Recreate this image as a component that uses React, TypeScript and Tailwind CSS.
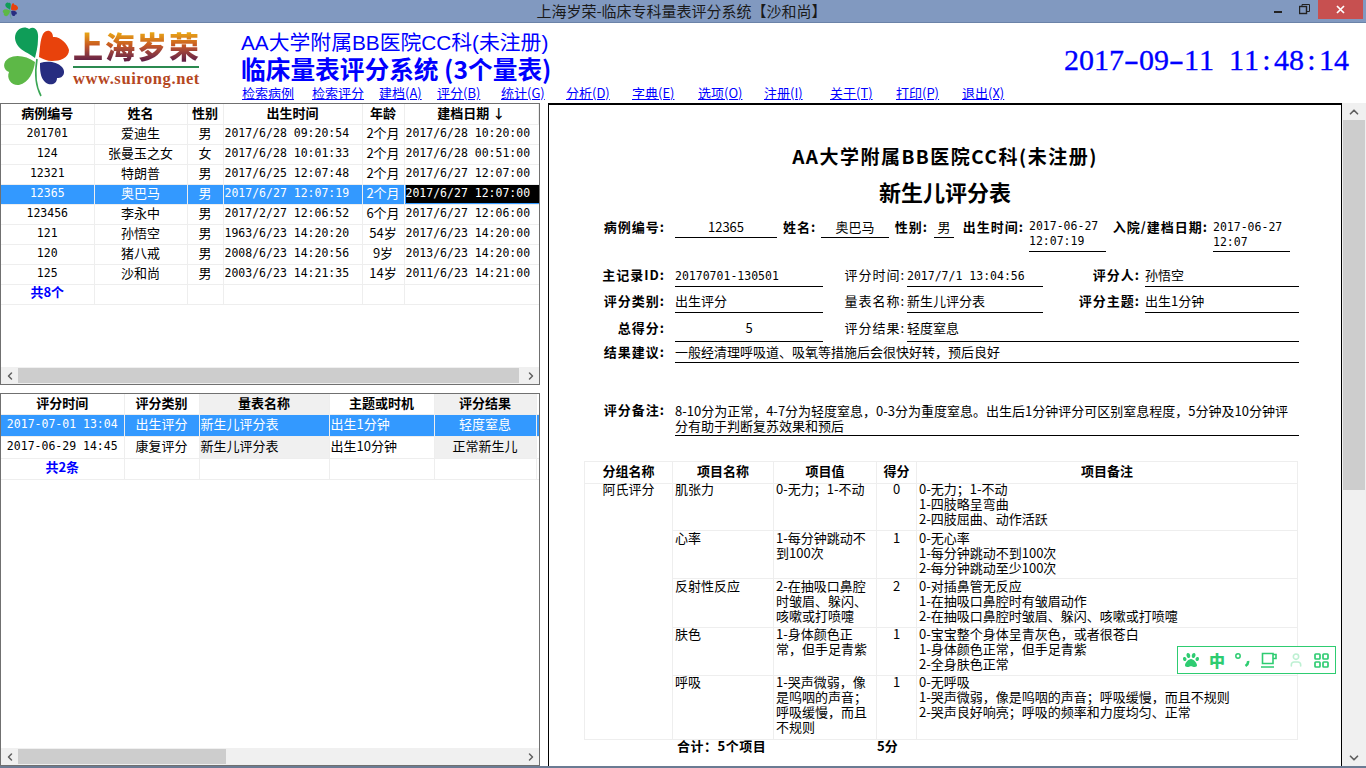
import { FaPaw } from "react-icons/fa";
import { ChevronLeft, ChevronRight, ChevronUp, ChevronDown, User } from "lucide-react";
import type { ReactNode } from "react";

const CJK = "font-['Noto_Sans_CJK_SC','Liberation_Sans',sans-serif]";
const MONO = "font-['DejaVu_Sans_Mono','Noto_Sans_CJK_SC',monospace] text-[11.5px]";

const menu = [
  { t: "检索病例", c: "w-[52px]" },
  { t: "检索评分", c: "w-[52px] ml-[18px]" },
  { t: "建档(A)", c: "w-[46px] ml-[15px]" },
  { t: "评分(B)", c: "w-[46px] ml-[12px]" },
  { t: "统计(G)", c: "w-[46px] ml-[18px]" },
  { t: "分析(D)", c: "w-[46px] ml-[19px]" },
  { t: "字典(E)", c: "w-[46px] ml-[20px]" },
  { t: "选项(O)", c: "w-[46px] ml-[20px]" },
  { t: "注册(I)", c: "w-[46px] ml-[20px]" },
  { t: "关于(T)", c: "w-[46px] ml-[20px]" },
  { t: "打印(P)", c: "w-[46px] ml-[20px]" },
  { t: "退出(X)", c: "w-[46px] ml-[20px]" },
];

const patients = [
  ["201701", "爱迪生", "男", "2017/6/28 09:20:54", "2个月", "2017/6/28 10:20:00"],
  ["124", "张曼玉之女", "女", "2017/6/28 10:01:33", "2个月", "2017/6/28 00:51:00"],
  ["12321", "特朗普", "男", "2017/6/25 12:07:48", "2个月", "2017/6/27 12:07:00"],
  ["12365", "奥巴马", "男", "2017/6/27 12:07:19", "2个月", "2017/6/27 12:07:00"],
  ["123456", "李永中", "男", "2017/2/27 12:06:52", "6个月", "2017/6/27 12:06:00"],
  ["121", "孙悟空", "男", "1963/6/23 14:20:20", "54岁", "2017/6/23 14:20:00"],
  ["120", "猪八戒", "男", "2008/6/23 14:20:56", "9岁", "2013/6/23 14:20:00"],
  ["125", "沙和尚", "男", "2003/6/23 14:21:35", "14岁", "2011/6/23 14:21:00"],
];

const items = [
  { name: "肌张力", value: "0-无力；1-不动", score: "0", h: "h-[47px]", top: "-mt-[3px]", note: ["0-无力；1-不动", "1-四肢略呈弯曲", "2-四肢屈曲、动作活跃"] },
  { name: "心率", value: "1-每分钟跳动不到100次", score: "1", h: "h-[48px]", top: "-mt-[1px]", note: ["0-无心率", "1-每分钟跳动不到100次", "2-每分钟跳动至少100次"] },
  { name: "反射性反应", value: "2-在抽吸口鼻腔时皱眉、躲闪、咳嗽或打喷嚏", score: "2", h: "h-[49px]", top: "-mt-[1px]", note: ["0-对插鼻管无反应", "1-在抽吸口鼻腔时有皱眉动作", "2-在抽吸口鼻腔时皱眉、躲闪、咳嗽或打喷嚏"] },
  { name: "肤色", value: "1-身体颜色正常，但手足青紫", score: "1", h: "h-[48px]", top: "-mt-[2px]", note: ["0-宝宝整个身体呈青灰色，或者很苍白", "1-身体颜色正常，但手足青紫", "2-全身肤色正常"] },
  { name: "呼吸", value: "1-哭声微弱，像是呜咽的声音；呼吸缓慢，而且不规则", score: "1", h: "h-[64px]", top: "-mt-[2px]", note: ["0-无呼吸", "1-哭声微弱，像是呜咽的声音；呼吸缓慢，而且不规则", "2-哭声良好响亮；呼吸的频率和力度均匀、正常"] },
];

function Clover({ className }: { className: string }) {
  return (
    <svg viewBox="0 0 70 72" className={className}>
      <path d="M33 33C26 27 14 25 13 13C13 4 22 0 27 4C33 0 37 6 36 14C36 22 34 28 33 33Z" fill="#0f9d58" />
      <path d="M37 32C38 24 38 15 41 9C45 3 51 6 51 12C58 11 66 19 67 25C67 33 58 36 50 36C45 36 41 34 37 32Z" fill="#e8420c" />
      <path d="M33 37C25 31 14 29 7 33C0 37 1 45 7 47C4 54 10 61 17 60C27 58 32 46 33 37Z" fill="#5db847" />
      <path d="M38 38C45 36 54 36 60 42C65 48 60 54 55 53C55 60 47 61 43 57C38 52 38 45 38 38Z" fill="#272d80" />
      <path d="M35 34C33 46 33 60 39 71" fill="none" stroke="#3aa655" strokeWidth="1.6" />
    </svg>
  );
}

function Clock({ text }: { text: string }) {
  return (
    <div className="flex text-[30px] leading-none font-['Liberation_Serif',serif] text-[#0000ff] [-webkit-text-stroke:0.3px_#0000ff]">
      {text.split("").map((ch, i) => (
        <span key={i} className={ch === "-" ? "w-[15px] text-center scale-x-150" : "w-[15px] text-center"}>
          {ch === " " ? "\u00a0" : ch}
        </span>
      ))}
    </div>
  );
}

function HScroll({ thumb, after }: { thumb: string; after: string }) {
  return (
    <div className="flex h-[17px] shrink-0 bg-[#f0f0f0] text-[#606060]">
      <div className="w-[17px] flex items-center justify-center">
        <ChevronLeft size={12} strokeWidth={3} />
      </div>
      <div className={thumb + " bg-[#cdcdcd] my-px"} />
      <div className={after} />
      <div className="w-[17px] flex items-center justify-center">
        <ChevronRight size={12} strokeWidth={3} />
      </div>
    </div>
  );
}

function Lbl({ w, bold = true, ml = "", children }: { w: string; bold?: boolean; ml?: string; children: ReactNode }) {
  return (
    <div className={`${w} ${ml} ${bold ? "font-bold" : ""} shrink-0 text-right leading-[20px] tracking-[1px] text-[13px] text-black whitespace-nowrap`}>
      {children}
    </div>
  );
}

function Field({ w, h = "h-full", ml, center, children }: { w: string; h?: string; ml: string; center?: boolean; children: ReactNode }) {
  return (
    <div className={`${w} ${h} ${ml} ${center ? "text-center" : ""} shrink-0 border-b border-black text-[13px] leading-[20px] text-black`}>
      {children}
    </div>
  );
}

function Report() {
  return (
    <div className={`flex-1 min-w-0 overflow-hidden border-2 border-r-0 border-b-0 border-black border-l-[1px] pt-[39px] ${CJK}`}>
      <div className="text-center text-[19px] font-bold leading-[24px] tracking-[1.5px] text-black">AA大学附属BB医院CC科(未注册)</div>
      <div className="mt-[11px] text-center text-[22px] font-bold leading-[24px] text-black">新生儿评分表</div>

      <div className="ml-[35px] w-[716px]">
        <div className="mt-[14px] flex h-[35px] items-start">
          <Lbl w="w-[81px]">病例编号:</Lbl>
          <Field w="w-[102px]" h="h-[21px]" ml="ml-[10px]" center>12365</Field>
          <Lbl w="w-[33px]" ml="ml-[6px]">姓名:</Lbl>
          <Field w="w-[68px]" h="h-[21px]" ml="ml-[5px]" center>奥巴马</Field>
          <Lbl w="w-[35px]" ml="ml-[4px]">性别:</Lbl>
          <Field w="w-[20px]" h="h-[21px]" ml="ml-[6px]" center>男</Field>
          <Lbl w="w-[64px]" ml="ml-[6px]">出生时间:</Lbl>
          <Field w="w-[77px]" h="h-[35px]" ml="ml-[5px]">
            <div className={`leading-[15px] pt-[2px] whitespace-pre ${MONO}`}>2017-06-27{"\n"}12:07:19</div>
          </Field>
          <Lbl w="w-[98px]" ml="ml-[4px]">入院/建档日期:</Lbl>
          <Field w="w-[77px]" h="h-[35px]" ml="ml-[5px]">
            <div className={`leading-[15px] pt-[3px] whitespace-pre ${MONO}`}>2017-06-27{"\n"}12:07</div>
          </Field>
        </div>

        <div className="mt-[13px] flex h-[22px]">
          <Lbl w="w-[81px]">主记录ID:</Lbl>
          <Field w="w-[148px]" ml="ml-[10px]"><span className={MONO}>20170701-130501</span></Field>
          <Lbl w="w-[82px]" bold={false}>评分时间:</Lbl>
          <Field w="w-[136px]" ml="ml-[2px]"><span className={MONO}>2017/7/1 13:04:56</span></Field>
          <Lbl w="w-[97px]">评分人:</Lbl>
          <Field w="w-[154px]" ml="ml-[5px]">孙悟空</Field>
        </div>
        <div className="mt-[4px] flex h-[22px]">
          <Lbl w="w-[81px]">评分类别:</Lbl>
          <Field w="w-[148px]" ml="ml-[10px]">出生评分</Field>
          <Lbl w="w-[82px]" bold={false}>量表名称:</Lbl>
          <Field w="w-[136px]" ml="ml-[2px]">新生儿评分表</Field>
          <Lbl w="w-[97px]">评分主题:</Lbl>
          <Field w="w-[154px]" ml="ml-[5px]">出生1分钟</Field>
        </div>
        <div className="mt-[5px] flex h-[24px]">
          <Lbl w="w-[81px]">总得分:</Lbl>
          <Field w="w-[148px]" ml="ml-[10px]" center>5</Field>
          <Lbl w="w-[82px]" bold={false}>评分结果:</Lbl>
          <Field w="w-[392px]" ml="ml-[2px]">轻度窒息</Field>
        </div>
        <div className="flex h-[21px]">
          <Lbl w="w-[81px]">结果建议:</Lbl>
          <Field w="w-[624px]" ml="ml-[10px]">一般经清理呼吸道、吸氧等措施后会很快好转，预后良好</Field>
        </div>
        <div className="mt-[40px] flex h-[33px]">
          <Lbl w="w-[81px]" ml="-mt-[3px]">评分备注:</Lbl>
          <Field w="w-[624px]" ml="ml-[10px]">
            <div className="leading-[15px]">8-10分为正常，4-7分为轻度窒息，0-3分为重度窒息。出生后1分钟评分可区别窒息程度，5分钟及10分钟评分有助于判断复苏效果和预后</div>
          </Field>
        </div>

        <table className="mt-[25px] w-[714px] table-fixed border-collapse text-[13px] text-black">
          <colgroup>
            <col className="w-[88px]" />
            <col className="w-[101px]" />
            <col className="w-[103px]" />
            <col className="w-[40px]" />
            <col />
          </colgroup>
          <thead>
            <tr className="h-[22px] text-[13px] font-bold">
              {["分组名称", "项目名称", "项目值", "得分", "项目备注"].map((h) => (
                <th key={h} className="border border-[#eeeeee] p-0 pb-[4px] font-bold leading-[16px]">{h}</th>
              ))}
            </tr>
          </thead>
          <tbody>
            {items.map((it, i) => (
              <tr key={it.name} className={it.h}>
                {i === 0 && (
                  <td rowSpan={5} className="border border-[#eeeeee] p-0 align-top text-center leading-[15px]"><div className="-mt-[3px]">阿氏评分</div></td>
                )}
                <td className="border border-[#eeeeee] px-[2px] py-0 align-top leading-[15px]"><div className={it.top}>{it.name}</div></td>
                <td className="border border-[#eeeeee] px-[2px] py-0 align-top leading-[15px]"><div className={it.top}>{it.value}</div></td>
                <td className="border border-[#eeeeee] p-0 align-top text-center leading-[15px]"><div className={it.top}>{it.score}</div></td>
                <td className="border border-[#eeeeee] px-[2px] py-0 align-top leading-[15px]">
                  <div className={it.top}>{it.note.map((n) => <div key={n}>{n}</div>)}</div>
                </td>
              </tr>
            ))}
          </tbody>
        </table>
        <div className="-mt-[1px] flex text-[13px] font-bold leading-[14px] text-black">
          <span className="ml-[93px] w-[200px] tracking-[0.5px]">合计：5个项目</span>
          <span>5分</span>
        </div>
      </div>
    </div>
  );
}

export default function App() {
  return (
    <div className={`relative flex h-[768px] w-[1366px] flex-col overflow-hidden bg-white ${CJK}`}>
      {/* 标题栏 */}
      <div className="relative flex h-[23px] shrink-0 items-start bg-[#8199c0] border-b border-[#6b83a8]">
        <Clover className="ml-[2px] mt-[2px] h-[17px] w-[17px]" />
        <div className="flex-1 pl-[80px] text-center text-[15px] leading-[22px] text-[#1a1a1a]">上海岁荣-临床专科量表评分系统【沙和尚】</div>
        <div className="mr-[3px] flex h-[19px] items-stretch text-black">
          <div className="flex w-[27px] items-center justify-center">
            <div className="mt-[5px] h-[2px] w-[8px] bg-[#222]" />
          </div>
          <div className="flex w-[27px] items-center justify-center">
            <svg width="11" height="11" viewBox="0 0 11 11" fill="none" stroke="#222" strokeWidth="1">
              <rect x="0.5" y="2.5" width="7" height="7" strokeWidth="1.4" />
              <path d="M3 2.5V0.5H10.5V7.5H8" />
            </svg>
          </div>
          <div className="flex w-[45px] items-center justify-center bg-[#c75050]">
            <svg width="9" height="9" viewBox="0 0 9 9" stroke="#fff" strokeWidth="1.7"><path d="M1 1L8 8M8 1L1 8" /></svg>
          </div>
        </div>
      </div>

      {/* 头部 */}
      <div className="flex h-[80px] shrink-0">
        <div className="flex w-[241px] shrink-0">
          <Clover className="ml-[2px] mt-[2px] h-[72px] w-[70px]" />
          <div className="ml-px w-[126px]">
            <div className="mt-[5px] h-[34px] bg-gradient-to-b from-[#f2c200] via-[#c85a20] to-[#5b1a45] bg-clip-text text-[30px] font-black leading-[34px] tracking-[2px] text-transparent whitespace-nowrap">上海岁荣</div>
            <div className="mt-[4px] h-[2px] bg-[#2b8a50]" />
            <div className="mt-px font-['Liberation_Serif',serif] text-[16.5px] font-bold leading-[20px] tracking-[0.6px] text-[#b5471f] whitespace-nowrap">www.suirong.net</div>
          </div>
        </div>
        <div className="min-w-0 flex-1 pt-[7px] text-[#0000ff]">
          <div className="h-[26px] text-[20.8px] leading-[26px] whitespace-nowrap font-['Liberation_Sans','Noto_Sans_CJK_SC',sans-serif]">AA大学附属BB医院CC科(未注册)</div>
          <div className="-mt-[3px] h-[30px] text-[24.7px] font-bold leading-[30px] whitespace-nowrap">临床量表评分系统 (3个量表)</div>
          <div className="mt-[2px] flex pl-[1px] text-[13px] leading-[15px]">
            {menu.map((m) => (
              <span key={m.t} className={m.c + " underline whitespace-nowrap"}>{m.t}</span>
            ))}
          </div>
        </div>
        <div className="mr-[17px] pt-[22px]">
          <Clock text="2017-09-11 11:48:14" />
        </div>
      </div>

      {/* 主体 */}
      <div className="flex min-h-0 flex-1 border-b-2 border-[#6b7b93]">
        <div className="flex w-[540px] shrink-0 flex-col">
          <div className="flex h-[282px] shrink-0 flex-col border border-[#707070]">
            <div className="min-h-0 flex-1 overflow-hidden">
              <table className="w-[538px] table-fixed border-collapse text-[13px] text-black">
                <colgroup>
                  <col className="w-[93px]" />
                  <col className="w-[93px]" />
                  <col className="w-[36px]" />
                  <col className="w-[139px]" />
                  <col className="w-[42px]" />
                  <col />
                </colgroup>
                <thead>
                  <tr className="h-[20px]">
                    {["病例编号", "姓名", "性别", "出生时间", "年龄", "建档日期 ↓"].map((h) => (
                      <th key={h} className="border-r border-b border-[#eeeeee] p-0 pb-[2px] font-bold leading-none">{h}</th>
                    ))}
                  </tr>
                </thead>
                <tbody>
                  {patients.map((p) => {
                    const sel = p[0] === "12365";
                    return (
                      <tr key={p[0]} className={sel ? "h-[20px] bg-[#3399ff] text-white" : "h-[20px]"}>
                        <td className={`border-r border-b border-[#eeeeee] p-0 pb-px text-center leading-none ${MONO}`}>{p[0]}</td>
                        <td className="border-r border-b border-[#eeeeee] p-0 pb-[3px] text-center leading-none">{p[1]}</td>
                        <td className="border-r border-b border-[#eeeeee] p-0 pb-[3px] text-center leading-none">{p[2]}</td>
                        <td className={`border-r border-b border-[#eeeeee] p-0 pb-px pl-px leading-none whitespace-pre ${MONO}`}>{p[3]}</td>
                        <td className="border-r border-b border-[#eeeeee] p-0 pb-[3px] text-center leading-none">{p[4]}</td>
                        <td className={`border-b border-[#eeeeee] p-0 pl-px leading-none whitespace-pre ${MONO}`}>
                          {sel ? <div className="flex h-[18px] items-center bg-black text-white">{p[5]}</div> : <div className="pb-px">{p[5]}</div>}
                        </td>
                      </tr>
                    );
                  })}
                  <tr className="h-[20px]">
                    <td className="border-r border-b border-[#eeeeee] p-0 pb-[5px] text-center font-bold leading-none text-[#0000ff]">共8个</td>
                    <td className="border-r border-b border-[#eeeeee]" />
                    <td className="border-r border-b border-[#eeeeee]" />
                    <td className="border-r border-b border-[#eeeeee]" />
                    <td className="border-r border-b border-[#eeeeee]" />
                    <td className="border-b border-[#eeeeee]" />
                  </tr>
                </tbody>
              </table>
            </div>
            <HScroll thumb="w-[501px]" after="flex-1" />
          </div>

          <div className="mt-[8px] flex min-h-0 flex-1 flex-col border border-[#707070]">
            <div className="min-h-0 flex-1 overflow-hidden">
              <table className="w-[538px] table-fixed border-collapse text-[13px] leading-[16px] text-black">
                <colgroup>
                  <col className="w-[123px]" />
                  <col className="w-[75px]" />
                  <col className="w-[130px]" />
                  <col className="w-[105px]" />
                  <col className="w-[102px]" />
                  <col />
                </colgroup>
                <thead>
                  <tr className="h-[20px]">
                    <th className="border-r border-b border-[#eeeeee] p-0 pb-[2px] font-bold">评分时间</th>
                    <th className="border-r border-b border-[#eeeeee] p-0 pb-[2px] font-bold">评分类别</th>
                    <th className="border-r border-b border-[#eeeeee] bg-[#f0f0f0] p-0 pb-[2px] font-bold">量表名称</th>
                    <th className="border-r border-b border-[#eeeeee] p-0 pb-[2px] font-bold">主题或时机</th>
                    <th className="border-r border-b border-[#eeeeee] bg-[#f0f0f0] p-0 pb-[2px] font-bold">评分结果</th>
                    <th className="border-b border-[#eeeeee] p-0" />
                  </tr>
                </thead>
                <tbody>
                  <tr className="h-[22px] bg-[#3399ff] text-white">
                    <td className={`border-r border-b border-[#eeeeee] p-0 pb-[2px] text-center whitespace-pre ${MONO}`}>2017-07-01 13:04</td>
                    <td className="border-r border-b border-[#eeeeee] p-0 pb-[3px] text-center">出生评分</td>
                    <td className="border-r border-b border-[#eeeeee] p-0 pb-[3px] pl-px">新生儿评分表</td>
                    <td className="border-r border-b border-[#eeeeee] p-0 pb-[3px] pl-px">出生1分钟</td>
                    <td className="border-r border-b border-[#eeeeee] p-0 pb-[3px] text-center">轻度窒息</td>
                    <td className="border-b border-[#eeeeee] p-0" />
                  </tr>
                  <tr className="h-[22px]">
                    <td className={`border-r border-b border-[#eeeeee] p-0 pb-[2px] text-center whitespace-pre ${MONO}`}>2017-06-29 14:45</td>
                    <td className="border-r border-b border-[#eeeeee] p-0 pb-[3px] text-center">康复评分</td>
                    <td className="border-r border-b border-[#eeeeee] bg-[#f0f0f0] p-0 pb-[3px] pl-px">新生儿评分表</td>
                    <td className="border-r border-b border-[#eeeeee] p-0 pb-[3px] pl-px">出生10分钟</td>
                    <td className="border-r border-b border-[#eeeeee] bg-[#f0f0f0] p-0 pb-[3px] text-center">正常新生儿</td>
                    <td className="border-b border-[#eeeeee] p-0" />
                  </tr>
                  <tr className="h-[21px]">
                    <td className="border-r border-b border-[#eeeeee] p-0 pb-[3px] text-center font-bold text-[#0000ff]">共2条</td>
                    <td className="border-r border-b border-[#eeeeee]" />
                    <td className="border-r border-b border-[#eeeeee]" />
                    <td className="border-r border-b border-[#eeeeee]" />
                    <td className="border-r border-b border-[#eeeeee]" />
                    <td className="border-b border-[#eeeeee]" />
                  </tr>
                </tbody>
              </table>
            </div>
            <HScroll thumb="w-[208px]" after="flex-1" />
          </div>
        </div>

        <div className="ml-[8px] flex min-w-0 flex-1">
          <Report />
          <div className="flex w-[25px] shrink-0 flex-col border-l border-black bg-[#f0f0f0] text-[#606060]">
            <div className="flex h-[17px] items-center justify-center"><ChevronUp size={14} strokeWidth={3} /></div>
            <div className="mx-px h-[370px] bg-[#cdcdcd]" />
            <div className="flex-1" />
            <div className="flex h-[17px] items-center justify-center"><ChevronDown size={14} strokeWidth={3} /></div>
          </div>
        </div>
      </div>

      {/* 输入法浮条 */}
      <div className="absolute left-[1177px] top-[646px] flex h-[28px] w-[159px] items-center border border-[#2ecc71] bg-white pl-[5px] text-[#2ecc71]">
        <FaPaw size={16} className="shrink-0" />
        <span className="ml-[10px] w-[15px] shrink-0 text-center text-[16px] font-black leading-none">中</span>
        <svg width="15" height="16" viewBox="0 0 15 16" className="ml-[11px] shrink-0" fill="none" stroke="#2ecc71">
          <circle cx="3" cy="4" r="2.2" strokeWidth="1.5" />
          <path d="M13 9c.4 2-.6 3.8-2.5 5" strokeWidth="2.6" />
        </svg>
        <svg width="16" height="16" viewBox="0 0 16 16" className="ml-[11px] shrink-0" fill="none" stroke="#2ecc71" strokeWidth="1.6">
          <path d="M1.5 1.5H12V11.5H1.5ZM12 2.5H15V6.5H12M0 15H13" />
        </svg>
        <User size={16} className="ml-[11px] shrink-0 text-[#bdf0d2]" strokeWidth={2.4} />
        <svg width="15" height="15" viewBox="0 0 15 15" className="ml-[10px] shrink-0" fill="none" stroke="#2ecc71" strokeWidth="1.7">
          <rect x="1" y="1" width="5" height="5" rx="0.8" />
          <rect x="9" y="1" width="5" height="5" rx="0.8" />
          <rect x="1" y="9" width="5" height="5" rx="0.8" />
          <rect x="9" y="9" width="5" height="5" rx="0.8" />
        </svg>
      </div>
    </div>
  );
}
